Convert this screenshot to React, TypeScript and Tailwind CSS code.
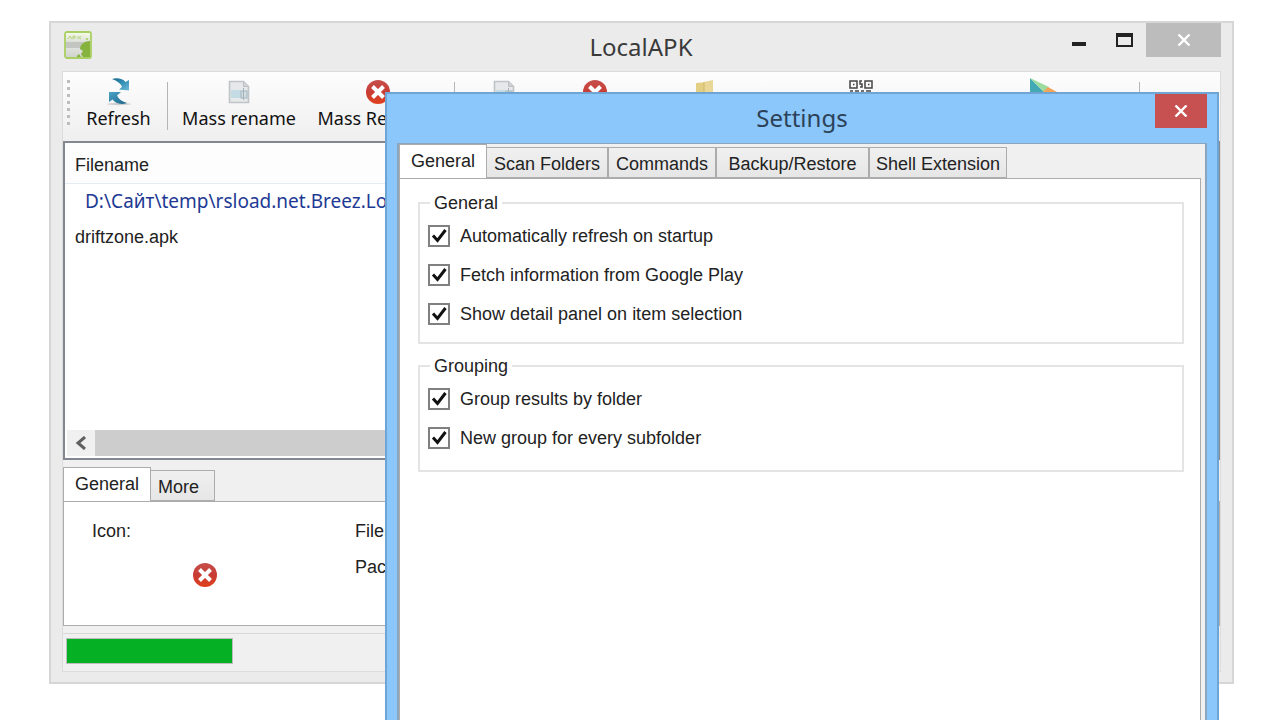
import React from 'react';

type IconProps = { className?: string };

const ui = "font-['Liberation_Sans',Arial,sans-serif]";
const seg = "font-['Noto_Sans','Segoe_UI',sans-serif]";

function ErrorIcon({ className = '' }: IconProps) {
  return (
    <svg viewBox="0 0 24 24" className={`h-6 w-6 ${className}`} aria-hidden="true">
      <defs>
        <linearGradient id="err" x1="0" y1="0" x2="0" y2="1">
          <stop offset="0" stopColor="#c6504c" />
          <stop offset="0.5" stopColor="#c83c34" />
          <stop offset="1" stopColor="#e0401c" />
        </linearGradient>
      </defs>
      <circle cx="12" cy="12" r="12" fill="url(#err)" />
      <path d="M6.500 6.500l11 11M17.500 6.500l-11 11" stroke="#fff" strokeWidth="4" />
    </svg>
  );
}

function ApkIcon() {
  return (
    <svg viewBox="0 0 28 28" className="h-7 w-7" aria-hidden="true">
      <defs>
        <linearGradient id="apkTop" x1="0" y1="0" x2="0" y2="1">
          <stop offset="0" stopColor="#f4f9e8" />
          <stop offset="1" stopColor="#dcdfd6" />
        </linearGradient>
        <linearGradient id="apkBot" x1="0" y1="0" x2="0" y2="1">
          <stop offset="0" stopColor="#fbfbfb" />
          <stop offset="1" stopColor="#cfd2cc" />
        </linearGradient>
      </defs>
      <rect x="1" y="1" width="26" height="26" rx="2" fill="url(#apkBot)" stroke="#a9cf62" strokeWidth="1.8" />
      <rect x="2" y="2" width="24" height="9" fill="url(#apkTop)" />
      <path d="M2 11h24v6H2z" fill="#c3c5c1" />
      <path d="M4 8l2-3 2 3M9 8V5h2v2H9M14 5v3M17 5l-2 1.500L17 8" stroke="#b5d67c" fill="none" />
      <path d="M26 10c-5 0-10 3-10 8l3 2-2 3 2 3h7z" fill="#86b33e" />
      <path d="M13 25l2-2 2 3h-4z" fill="#86b33e" />
      <circle cx="23" cy="8" r="1" fill="#a3cf52" />
    </svg>
  );
}

function RefreshIcon() {
  return (
    <svg viewBox="0 0 24 28" className="h-7 w-6" aria-hidden="true">
      <defs>
        <linearGradient id="refTop" x1="0" y1="0" x2="1" y2="1">
          <stop offset="0" stopColor="#1b6688" />
          <stop offset="0.45" stopColor="#2f8db3" />
          <stop offset="1" stopColor="#6dbbd8" />
        </linearGradient>
        <linearGradient id="refBottom" x1="0" y1="0" x2="1" y2="1">
          <stop offset="0" stopColor="#4aa5c8" />
          <stop offset="1" stopColor="#1b6688" />
        </linearGradient>
      </defs>
      <ellipse cx="12" cy="26" rx="12" ry="1.200" fill="#b9bcbe" opacity="0.7" />
      <path d="M5 1C10-.5 16 .5 18.500 4L22 2v10.500L12 11.500l3-2.500C14 5.500 10 3 5 1z" fill="url(#refTop)" />
      <path d="M2 14h12l-4 3.500c2 4 5 6 10 7.500-6 2-12 .5-14.500-3.500L2 24z" fill="url(#refBottom)" />
    </svg>
  );
}

function RenameIcon() {
  return (
    <svg viewBox="0 0 22 24" className="h-6 w-6" aria-hidden="true">
      <path d="M1.500 1.500h14l5 5v16h-19z" fill="#e6e8e9" stroke="#c0c4c6" strokeWidth="1.600" />
      <path d="M15.500 1.500v5h5" fill="#cfd3d5" stroke="#bcc1c3" />
      <rect x="3" y="10" width="10" height="8" fill="#c2dbe5" />
      <rect x="13" y="11" width="6" height="7" fill="#d3dcdf" stroke="#a5b6bd" />
      <path d="M15.500 8v12" stroke="#9fb4bc" />
    </svg>
  );
}

function FolderIcon() {
  return (
    <svg viewBox="0 0 18 24" className="h-6 w-5" aria-hidden="true">
      <path d="M0 3l12-1v21H0z" fill="#e3cf84" />
      <path d="M8 2l9-2v21l-9 3z" fill="#e9d798" />
      <path d="M8 2v22" stroke="#d3b561" />
    </svg>
  );
}

function QrIcon() {
  return (
    <svg viewBox="0 0 24 24" className="h-6 w-6" fill="none" stroke="#444" strokeWidth="1.500" aria-hidden="true">
      <path d="M1 1h7v7H1zM16 1h7v7h-7zM1 16h7v7H1z" />
      <path d="M4 4.500h1.500M19 4.500h1.500M4 19.500h1.500M13 1h-2v3h2v3h-2M1 11h3m2 0h4m2 0h3m2 0h5M12 14h4m2 3h5m-11 3h5" />
    </svg>
  );
}

function PlayIcon() {
  return (
    <svg viewBox="0 0 28 28" className="h-7 w-7" aria-hidden="true">
      <path d="M0 0l14 14L0 28z" fill="#42a9b5" />
      <path d="M0 0l19 9-5 5z" fill="#9ddc9c" />
      <path d="M18 9l9 5-9 5-5-5z" fill="#f0a45c" />
      <path d="M0 28l19-9-5-5z" fill="#d9665c" />
    </svg>
  );
}

function Cross() {
  return (
    <svg viewBox="0 0 14 12" className="h-3 w-3.5" aria-hidden="true">
      <path d="M1.500 0.500l11 11M12.500 0.500l-11 11" stroke="#fff" strokeWidth="2.400" />
    </svg>
  );
}

function Tab({ label, active = false, className }: { label: string; active?: boolean; className: string }) {
  return (
    <button
      type="button"
      role="tab"
      aria-selected={active}
      className={`flex shrink-0 justify-center border border-[#acacac] pt-0.5 whitespace-nowrap ${
        active ? '-mb-px h-[35px] border-b-white bg-white' : 'h-[31px] bg-linear-to-b from-[#f0f0f0] to-[#e6e6e6]'
      } ${className}`}
    >
      {label}
    </button>
  );
}

function Check({ label }: { label: string }) {
  return (
    <label className="flex h-[22px] items-center gap-2.5">
      <span className="relative flex h-[22px] w-[22px] shrink-0">
        <input type="checkbox" defaultChecked className="peer h-[22px] w-[22px] appearance-none border-2 border-[#808080] bg-white" />
        <svg viewBox="0 0 22 22" className="pointer-events-none absolute inset-0 hidden h-[22px] w-[22px] peer-checked:block" aria-hidden="true">
          <path d="M5 10.500l4.500 5L17.500 5" fill="none" stroke="#111" strokeWidth="3" />
        </svg>
      </span>
      <span className="whitespace-nowrap">{label}</span>
    </label>
  );
}

function Group({ title, items, className }: { title: string; items: string[]; className: string }) {
  return (
    <fieldset className={`border-2 border-[#e4e4e4] pl-2 ${className}`}>
      <legend className="ml-0.5 px-1 leading-5">{title}</legend>
      <div className="flex flex-col gap-[17px] pt-3">
        {items.map((i) => (
          <Check key={i} label={i} />
        ))}
      </div>
    </fieldset>
  );
}

function Tool({ label, icon, className }: { label: string; icon: React.ReactNode; className: string }) {
  return (
    <button type="button" className={`flex shrink-0 flex-col items-center whitespace-nowrap ${className}`}>
      <span className="flex h-7 items-center">{icon}</span>
      <span className="leading-6">{label}</span>
    </button>
  );
}

function IconTool({ label, icon, className }: { label: string; icon: React.ReactNode; className: string }) {
  return (
    <button type="button" aria-label={label} className={`flex h-7 shrink-0 items-center justify-center ${className}`}>
      {icon}
    </button>
  );
}

function Divider() {
  return <span className="mt-1 h-12 w-px shrink-0 bg-[#b5b5b5]" />;
}

function MainWindow() {
  return (
    <section className="flex h-[663px] flex-col border-2 border-[#d6d6d6] bg-[#ebebeb] px-[11px] pb-[10px]">
      <header className="flex h-12 shrink-0 items-start">
        <div className="w-[167px] flex-none pt-2 pl-0.5">
          <ApkIcon />
        </div>
        <h1 className={`flex-1 pt-2 text-center text-2xl leading-8 text-[#3a3a3a] ${seg}`}>LocalAPK</h1>
        <div className="flex w-[168px] flex-none justify-end">
          <button type="button" aria-label="Minimize" className="flex h-[34px] w-[46px] items-center justify-center pt-2">
            <span className="h-1 w-3.5 bg-[#222]" />
          </button>
          <button type="button" aria-label="Maximize" className="flex h-[34px] w-11 items-center justify-center">
            <span className="h-3.5 w-[17px] border-2 border-t-4 border-[#222]" />
          </button>
          <button type="button" aria-label="Close" className="flex h-[34px] w-[75px] items-center justify-center bg-[#bcbcbc]">
            <Cross />
          </button>
        </div>
      </header>
      <div className="flex min-h-0 flex-1 flex-col border border-[#dcdcdc] bg-[#f0f0f0]">
        <nav className={`flex h-[69px] shrink-0 items-start overflow-hidden bg-linear-to-b from-[#fdfdfd] to-[#efefef] pt-1.5 text-lg text-[#111] ${seg}`}>
          <span className="mt-0.5 ml-1 flex w-[3px] shrink-0 flex-col gap-1">
            {[0, 1, 2, 3, 4, 5, 6].map((i) => (
              <span key={i} className="h-[3px] w-[3px] bg-[#bdbdbd]" />
            ))}
          </span>
          <Tool label="Refresh" icon={<RefreshIcon />} className="w-[97px]" />
          <Divider />
          <Tool label="Mass rename" icon={<RenameIcon />} className="w-[142px]" />
          <Tool label="Mass Removal" icon={<ErrorIcon />} className="w-[136px]" />
          <span className="w-2 shrink-0" />
          <Divider />
          <IconTool label="Rename" icon={<RenameIcon />} className="w-[98px]" />
          <IconTool label="Delete" icon={<ErrorIcon />} className="w-[84px]" />
          <IconTool label="Open folder" icon={<FolderIcon />} className="w-[136px]" />
          <IconTool label="Show QR code" icon={<QrIcon />} className="w-[176px]" />
          <IconTool label="Google Play" icon={<PlayIcon />} className="w-[190px]" />
          <Divider />
        </nav>
        <div className="flex h-[319px] shrink-0 flex-col border-2 border-[#828790] bg-white">
          <table className="w-full border-collapse text-left">
            <thead>
              <tr className="h-10 border-b border-[#e2ecf5] bg-[#fdfdfd]">
                <th className="pt-1 pl-2.5 font-normal">Filename</th>
              </tr>
            </thead>
            <tbody>
              <tr>
                <td className={`h-9 pl-5 text-[19px] leading-6 text-[#1e3a94] ${seg}`}>D:\Сайт\temp\rsload.net.Breez.LocalAPK</td>
              </tr>
              <tr>
                <td className="h-9 pl-2.5">driftzone.apk</td>
              </tr>
            </tbody>
          </table>
          <div className="mx-0.5 mt-auto mb-0.5 flex h-[26px] items-center bg-[#cdcdcd]">
            <button type="button" aria-label="Scroll left" className="flex h-full w-7 items-center justify-center bg-[#f0f0f0]">
              <svg viewBox="0 0 12 14" className="h-3.5 w-3" aria-hidden="true">
                <path d="M10 1L3 7l7 6" fill="none" stroke="#606060" strokeWidth="3" />
              </svg>
            </button>
          </div>
        </div>
        <div className="mt-[7px] flex items-end" role="tablist">
          <Tab label="General" active className="w-[88px]" />
          <Tab label="More" className="-ml-px w-[65px] pr-2" />
        </div>
        <div className="flex h-[125px] shrink-0 border border-[#acacac] bg-white pt-[17px] pl-7">
          <div className="w-[263px] flex-none">
            <p className="leading-6">Icon:</p>
            <ErrorIcon className="mt-5 ml-[101px]" />
          </div>
          <div className="flex flex-col gap-3 leading-6">
            <p>Filename:</p>
            <p>Package:</p>
          </div>
        </div>
        <footer className="mt-[7px] flex flex-1 items-start border-t border-[#d9d9d9] px-[3px] pt-1">
          <div role="progressbar" aria-label="Scan progress" className="h-[26px] w-[167px] border border-[#bcbcbc] bg-[#06b025]" />
        </footer>
      </div>
    </section>
  );
}

function SettingsDialog() {
  return (
    <section role="dialog" aria-label="Settings" className="absolute top-[92px] right-[61px] bottom-0 left-[385px] flex flex-col border-2 border-b-0 border-[#6fa5d4] bg-[#8bc7fb] px-2.5">
      <header className="flex h-[49px] shrink-0 items-start">
        <span className="w-[52px]" />
        <h2 className={`flex-1 pt-2 text-center text-2xl leading-8 text-[#2c4258] ${seg}`}>Settings</h2>
        <button type="button" aria-label="Close settings" className="flex h-[34px] w-[52px] items-center justify-center bg-[#c75050]">
          <Cross />
        </button>
      </header>
      <div className="flex min-h-0 flex-1 flex-col border-x-2 border-t border-[#8aa5bd] bg-[#f0f0f0] pr-1">
        <div className="flex items-end" role="tablist">
          <Tab label="General" active className="w-[88px]" />
          <Tab label="Scan Folders" className="-ml-px w-[122px]" />
          <Tab label="Commands" className="w-[108px]" />
          <Tab label="Backup/Restore" className="w-[153px]" />
          <Tab label="Shell Extension" className="w-[138px]" />
        </div>
        <div className="flex-1 border border-b-0 border-[#acacac] bg-white pt-3.5 pr-4 pl-[18px]">
          <Group
            title="General"
            className="h-[151px]"
            items={['Automatically refresh on startup', 'Fetch information from Google Play', 'Show detail panel on item selection']}
          />
          <Group title="Grouping" className="mt-3 h-[116px]" items={['Group results by folder', 'New group for every subfolder']} />
        </div>
      </div>
    </section>
  );
}

export default function App() {
  return (
    <main className={`relative h-screen overflow-hidden bg-white pt-[21px] pr-[46px] pl-[49px] text-lg text-[#222] ${ui}`}>
      <MainWindow />
      <SettingsDialog />
    </main>
  );
}
